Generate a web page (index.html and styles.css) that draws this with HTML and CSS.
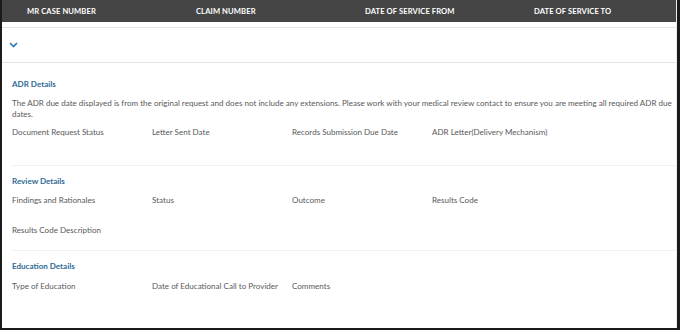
FILE: index.html
```html
<!DOCTYPE html>
<html>
<head>
<meta charset="utf-8">
<link rel="stylesheet" href="styles.css">
</head>
<body>
<div class="page">
  <div class="head">
    <div class="hcell">MR CASE NUMBER</div>
    <div class="hcell">CLAIM NUMBER</div>
    <div class="hcell">DATE OF SERVICE FROM</div>
    <div class="hcell">DATE OF SERVICE TO</div>
  </div>
  <div class="toggle">
    <svg class="chev" width="9" height="6" viewBox="0 0 9 6"><path d="M1 1 L4.5 4.5 L8 1" fill="none" stroke="#2b78b3" stroke-width="1.6"/></svg>
  </div>
  <div class="section first">
    <div class="title">ADR Details</div>
    <p class="note">The ADR due date displayed is from the original request and does not include any extensions. Please work with your medical review contact to ensure you are meeting all required ADR due dates.</p>
    <div class="fields adr">
      <div>Document Request Status</div>
      <div>Letter Sent Date</div>
      <div>Records Submission Due Date</div>
      <div>ADR Letter(Delivery Mechanism)</div>
    </div>
  </div>
  <div class="section review">
    <div class="title">Review Details</div>
    <div class="fields rows">
      <div>Findings and Rationales</div>
      <div>Status</div>
      <div>Outcome</div>
      <div>Results Code</div>
      <div>Results Code Description</div>
    </div>
  </div>
  <div class="section edu">
    <div class="title">Education Details</div>
    <div class="fields">
      <div>Type of Education</div>
      <div>Date of Educational Call to Provider</div>
      <div>Comments</div>
    </div>
  </div>
</div>
</body>
</html>
```
FILE: styles.css
```css
html, body { margin: 0; padding: 0; background: #1b1b1b; }
body { width: 680px; height: 330px; overflow: hidden; font-family: Lato, "Open Sans", sans-serif; }
.page {
  box-sizing: border-box;
  width: 675px; height: 328px;
  margin-left: 2px;
  background: #fff;
  border-right: 1px solid #ececec;
}
.head {
  height: 22px; background: #454545;
  display: grid; grid-template-columns: repeat(4, 169px);
}
.hcell {
  padding-left: 25px; color: #fff; font-weight: 700; font-size: 7.6px;
  line-height: 22px; letter-spacing: 0.1px;
}
.toggle {
  margin-top: 5px; height: 34px;
  border-top: 1px solid #e4e4e4; border-bottom: 1px solid #e4e4e4;
  display: flex; align-items: center; padding-left: 7px;
}
.chev { display: block; margin-top: -1px; }
.section { margin-left: 10px; font-size: 8.05px; color: #5a5a5a; }
.title { color: #2f6a96; font-weight: 700; line-height: 11px; }
.first { padding-top: 16px; height: 86px; border-bottom: 1px solid #f3f3f3; }
.note { margin: 8px 0 0; line-height: 11px; padding-right: 2px; }
.fields { display: grid; grid-template-columns: repeat(4, 140px); line-height: 11px; }
.adr { margin-top: 7px; }
.review { padding-top: 10px; height: 74px; border-bottom: 1px solid #f3f3f3; }
.review .fields { margin-top: 8px; row-gap: 19px; }
.edu { padding-top: 10px; }
.edu .fields { margin-top: 9px; }
```
